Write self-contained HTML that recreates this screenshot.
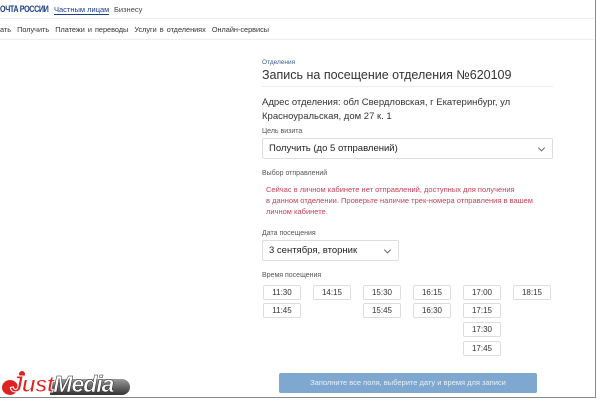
<!DOCTYPE html>
<html><head><meta charset="utf-8"><style>
*{margin:0;padding:0;box-sizing:border-box}
body{width:600px;height:400px;background:#fff;font-family:"Liberation Sans",sans-serif;color:#333;position:relative;overflow:hidden}
.a{position:absolute;white-space:nowrap}
.frame{position:absolute;left:0;top:0;width:596px;height:398px;border:1px solid #888;border-left:none;border-top:none}
.t{font-size:7px;color:#555}
.sel{position:absolute;border:1px solid #ddd;border-radius:2px;font-size:9.5px;color:#222;padding-left:6px;display:flex;align-items:center}
.chev{position:absolute;right:8px;top:50%;width:5px;height:5px;border-right:1px solid #666;border-bottom:1px solid #666;transform:translateY(-70%) rotate(45deg)}
.b{position:absolute;width:38px;height:15px;border:1px solid #ddd;border-radius:2px;font-size:8px;color:#333;text-align:center;line-height:13px}
</style></head><body>
<div class="frame"></div>
<div class="a" style="left:0;top:4px;font-size:9px;font-weight:bold;color:#1a3e8c;letter-spacing:-0.5px;transform:scaleX(0.8);transform-origin:left">ОЧТА РОССИИ</div>
<div class="a" style="left:54px;top:5px;font-size:7.5px;color:#1a3e8c;border-bottom:1px solid #1a3e8c">Частным лицам</div>
<div class="a" style="left:114px;top:5px;font-size:7.5px;color:#444">Бизнесу</div>
<div class="a" style="left:0;top:18px;width:594px;border-top:1px solid #eee"></div>
<div class="a" style="left:0;top:25px;font-size:7.3px;color:#333;word-spacing:1px">ать &nbsp;Получить &nbsp;Платежи и переводы &nbsp;Услуги в отделениях &nbsp;Онлайн-сервисы</div>
<div class="a" style="left:0;top:39px;width:594px;border-top:1px solid #eee"></div>
<div class="a" style="left:262px;top:59px;font-size:6.5px;color:#3a5f8f">Отделения</div>
<div class="a" style="left:262px;top:68px;font-size:12.5px;color:#333">Запись на посещение отделения №620109</div>
<div class="a" style="left:262px;top:86px;width:291px;border-top:1px solid #eee"></div>
<div class="a" style="left:262px;top:96px;font-size:9.5px;line-height:14px;color:#333">Адрес отделения: обл Свердловская, г Екатеринбург, ул<br>Красноуральская, дом 27 к. 1</div>
<div class="a t" style="left:262px;top:128px">Цель визита</div>
<div class="sel" style="left:262px;top:138px;width:291px;height:21px">Получить (до 5 отправлений)<span class="chev"></span></div>
<div class="a t" style="left:262px;top:170px">Выбор отправлений</div>
<div class="a" style="left:266px;top:184px;font-size:7.5px;line-height:11px;color:#c4425a">Сейчас в личном кабинете нет отправлений, доступных для получения<br>в данном отделении. Проверьте наличие трек-номера отправления в вашем<br>личном кабинете.</div>
<div class="a t" style="left:262px;top:230px">Дата посещения</div>
<div class="sel" style="left:262px;top:240px;width:137px;height:21px">3 сентября, вторник<span class="chev"></span></div>
<div class="a t" style="left:262px;top:272px">Время посещения</div>
<div class="b" style="left:263px;top:285px">11:30</div>
<div class="b" style="left:313px;top:285px">14:15</div>
<div class="b" style="left:363px;top:285px">15:30</div>
<div class="b" style="left:413px;top:285px">16:15</div>
<div class="b" style="left:463px;top:285px">17:00</div>
<div class="b" style="left:513px;top:285px">18:15</div>
<div class="b" style="left:263px;top:303px">11:45</div>
<div class="b" style="left:363px;top:303px">15:45</div>
<div class="b" style="left:413px;top:303px">16:30</div>
<div class="b" style="left:463px;top:303px">17:15</div>
<div class="b" style="left:463px;top:322px">17:30</div>
<div class="b" style="left:463px;top:341px">17:45</div>
<div class="a" style="left:279px;top:373px;width:258px;height:20px;background:#7fa8d1;border-radius:2px;color:#e8f0f8;font-size:7.5px;text-align:center;line-height:20px">Заполните все поля, выберите дату и время для записи</div>
<div class="a" style="left:50px;top:379px;width:80px;height:16px;background:linear-gradient(#999,#333);border-radius:0 9px 9px 0"></div>
<div class="a" style="left:2px;top:380px;width:16px;height:15px;background:#d22;border-radius:50%"></div>
<div class="a" style="left:19px;top:371px;width:6px;height:6px;background:#d22;border-radius:50%"></div>
<div class="a" style="left:10px;top:371px;font-size:23px;font-weight:bold;font-style:italic;letter-spacing:-1px;line-height:26px"><span style="color:#d22;-webkit-text-stroke:1px #fff">Just</span><span style="color:#fff;-webkit-text-stroke:0.5px #222">Media</span></div>
</body></html>
